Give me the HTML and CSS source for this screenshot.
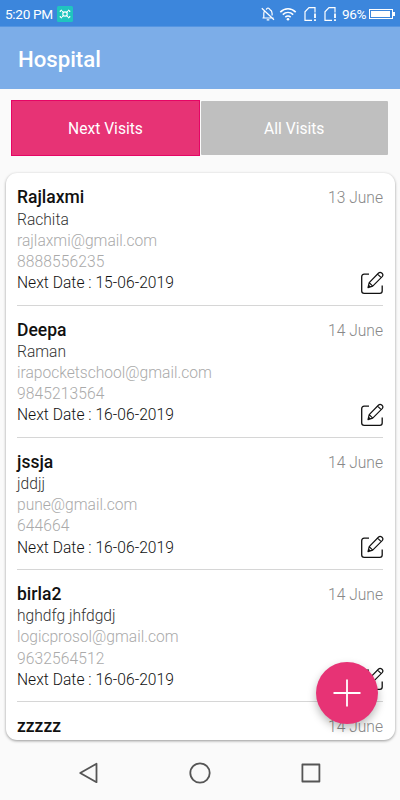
FILE: index.html
```html
<!DOCTYPE html>
<html lang="en">
<head>
    <meta charset="UTF-8">
    <meta name="viewport" content="width=device-width, initial-scale=1.0">
    <title>Hospital</title>
    <link rel="stylesheet" href="styles.css">
</head>
<body>
    <!-- Shared icons -->
    <svg class="icon-defs" width="0" height="0">
        <symbol id="icon-edit" viewBox="0 0 24 24">
            <path d="M9 3.2H4.2C2.6 3.2 1.7 4.1 1.7 5.7V20c0 1.6.9 2.4 2.5 2.4h15.6c1.6 0 2.4-.8 2.4-2.4v-5.6" stroke-width="1.3"/>
            <path d="M8 16.6l1.2-5L18.6 2c.9-.9 2.1-.9 3.1 0l.5.5c.9 1 .9 2.1 0 3.1l-9.5 9.5zM17.6 3.1l3.6 3.6M9.2 11.6l3.5 3.5M8 16.6l1-2 1 1z" stroke-width="1.2"/>
        </symbol>
        <symbol id="icon-sim" viewBox="0 0 14 16">
            <path d="M9 14.3H2V5.8L6 1.6h6v5" stroke-width="1.2"/>
            <path d="M12 7.5v4.5M12 13.2v1.8" stroke-width="1.8"/>
        </symbol>
    </svg>

    <div class="screen">
        <div class="status-bar">
            <span class="clock">5:20 PM</span>
            <svg class="app-badge" width="16" height="16" viewBox="0 0 16 16">
                <path d="M3.3 6V5L5 4M11 4l1.7 1v1M3.3 10v1L5 12M11 12l1.7-1v-1M5.2 5.2l1.3 1.3M10.8 5.2L9.5 6.5M5.2 10.8l1.3-1.3M10.8 10.8L9.5 9.5"/>
                <circle cx="8" cy="8" r="2.2"/>
            </svg>
            <div class="status-icons">
                <svg class="bell" width="14" height="14" viewBox="0 0 14 14">
                    <path d="M1.5 11h11M2.8 11V6.4c0-1.1.3-1.9.9-2.6M5 2.6C6 2 6 1 7 1s1 1 2 1.6c1.5.8 2.1 2 2.1 3.8v2.2M.8 1.3l12.2 11.5M5.7 12.8h2.6"/>
                </svg>
                <svg class="wifi" width="18" height="14" viewBox="0 0 18 14">
                    <path d="M1.3 5.1c4.5-4.4 10.9-4.4 15.4 0M3.8 7.7c3.1-2.9 7.3-2.9 10.4 0M6.3 10.2c1.6-1.4 3.8-1.4 5.4 0"/>
                    <circle cx="9" cy="12.2" r="1.3"/>
                </svg>
                <svg class="sim" width="14" height="16"><use href="#icon-sim"/></svg>
                <svg class="sim" width="14" height="16"><use href="#icon-sim"/></svg>
                <span class="percent">96%</span>
                <div class="battery"><div class="battery-level"></div></div>
            </div>
        </div>

        <div class="app-bar">
            <h1>Hospital</h1>
        </div>

        <div class="tabs">
            <button class="tab active">Next Visits</button>
            <button class="tab">All Visits</button>
        </div>

        <div class="visit-list">
            <div class="visit">
                <div class="visit-info">
                    <h2>Rajlaxmi</h2>
                    <p>Rachita</p>
                    <p class="contact">rajlaxmi@gmail.com</p>
                    <p class="contact phone">8888556235</p>
                    <p class="next-date">Next Date : 15-06-2019</p>
                </div>
                <div class="visit-side">
                    <span class="date">13 June</span>
                    <svg class="edit" width="24" height="24"><use href="#icon-edit"/></svg>
                </div>
            </div>
            <div class="visit">
                <div class="visit-info">
                    <h2>Deepa</h2>
                    <p>Raman</p>
                    <p class="contact">irapocketschool@gmail.com</p>
                    <p class="contact phone">9845213564</p>
                    <p class="next-date">Next Date : 16-06-2019</p>
                </div>
                <div class="visit-side">
                    <span class="date">14 June</span>
                    <svg class="edit" width="24" height="24"><use href="#icon-edit"/></svg>
                </div>
            </div>
            <div class="visit">
                <div class="visit-info">
                    <h2>jssja</h2>
                    <p>jddjj</p>
                    <p class="contact">pune@gmail.com</p>
                    <p class="contact phone">644664</p>
                    <p class="next-date">Next Date : 16-06-2019</p>
                </div>
                <div class="visit-side">
                    <span class="date">14 June</span>
                    <svg class="edit" width="24" height="24"><use href="#icon-edit"/></svg>
                </div>
            </div>
            <div class="visit">
                <div class="visit-info">
                    <h2>birla2</h2>
                    <p>hghdfg jhfdgdj</p>
                    <p class="contact">logicprosol@gmail.com</p>
                    <p class="contact phone">9632564512</p>
                    <p class="next-date">Next Date : 16-06-2019</p>
                </div>
                <div class="visit-side">
                    <span class="date">14 June</span>
                    <svg class="edit" width="24" height="24"><use href="#icon-edit"/></svg>
                </div>
            </div>
            <div class="visit">
                <div class="visit-info">
                    <h2>zzzzz</h2>
                </div>
                <div class="visit-side">
                    <span class="date">14 June</span>
                </div>
            </div>
        </div>

        <button class="add-btn" aria-label="Add">
            <svg width="28" height="28" viewBox="0 0 28 28"><path d="M14 .5v27M.5 14h27"/></svg>
        </button>

        <div class="nav-bar">
            <svg width="24" height="24" viewBox="0 0 24 24"><path d="M19.5 2.8v18.4L3.2 12z"/></svg>
            <svg width="24" height="24" viewBox="0 0 24 24"><circle cx="12" cy="12" r="9.7"/></svg>
            <svg width="24" height="24" viewBox="0 0 24 24"><rect x="3.4" y="3.5" width="17" height="17"/></svg>
        </div>
    </div>
</body>
</html>
```
FILE: styles.css
```css
:root {
    --blue-dark: #3c86dc;
    --blue-light: #7cade8;
    --pink: #e73375;
    --pink-border: #e60565;
    --grey: #bfbfbf;
    --bg: #fafafa;
}

* {
    margin: 0;
    padding: 0;
    box-sizing: border-box;
}

body {
    font-family: Roboto, sans-serif;
    background: var(--bg);
}

svg {
    display: block;
    fill: none;
}

.icon-defs {
    position: absolute;
}

.screen {
    position: relative;
    width: 400px;
    height: 800px;
    overflow: hidden;
    display: flex;
    flex-direction: column;
}

/* Status bar */
.status-bar {
    height: 27px;
    flex: none;
    display: flex;
    align-items: center;
    padding: 0 5px;
    background: var(--blue-dark);
    border-bottom: 1px solid #5595e1;
    color: #fff;
    font-size: 13.6px;
}

.clock {
    width: 52px;
    padding-top: 2px;
    letter-spacing: -0.3px;
    white-space: nowrap;
}

.app-badge {
    margin-top: 2px;
    background: #20c4bf;
    border-radius: 1.5px;
    stroke: #fff;
    stroke-width: 1.2;
}

.status-icons {
    margin-left: auto;
    padding-top: 2px;
    display: flex;
    align-items: center;
    stroke: #fff;
    stroke-width: 1.2;
}

.bell {
    margin-right: -1px;
    transform: translateX(1px);
}

.wifi {
    margin-left: 6px;
    stroke-width: 1.6;
}

.wifi circle {
    fill: #fff;
    stroke: none;
}

.sim {
    margin-left: 6px;
}

.percent {
    margin-left: 5px;
    width: 24px;
    font-size: 13.6px;
    letter-spacing: -0.4px;
}

.battery {
    position: relative;
    width: 24px;
    height: 10px;
    margin: 0 2px 0 3px;
    padding: 1px;
    border: 1px solid #fff;
}

.battery::after {
    content: "";
    position: absolute;
    top: 2px;
    right: -3px;
    width: 2px;
    height: 4px;
    background: #fff;
}

.battery-level {
    width: 96%;
    height: 100%;
    background: #fff;
}

/* Header */
.app-bar {
    height: 62px;
    flex: none;
    display: flex;
    align-items: center;
    padding: 2px 18px 0;
    background: var(--blue-light);
}

.app-bar h1 {
    color: #fff;
    font-size: 22.2px;
    font-weight: 500;
}

/* Tabs */
.tabs {
    display: flex;
    align-items: center;
    flex: none;
    height: 56px;
    margin: 11px 11px 0;
}

.tab {
    width: 187.5px;
    height: 54px;
    padding-top: 1px;
    border: none;
    border-radius: 1px;
    background: var(--grey);
    color: #fff;
    font: 400 15.6px Roboto, sans-serif;
}

.tab.active {
    width: 189px;
    height: 56px;
    margin-right: 0.5px;
    border: 1px solid var(--pink-border);
    border-radius: 0;
    background: var(--pink);
}

/* Visits */
.visit-list {
    flex: none;
    height: 567px;
    margin: 17px 5px 0 6px;
    padding: 0.7px 12px 0 11px;
    overflow: hidden;
    background: #fff;
    border-radius: 11px;
    box-shadow: 0 1px 3px rgba(0, 0, 0, 0.4);
}

.visit {
    display: flex;
    justify-content: space-between;
    height: 132.2px;
    padding: 13.7px 0 11.3px;
    border-bottom: 1px solid #d6d6d6;
    line-height: 21.2px;
    font-size: 15.6px;
    font-weight: 300;
}

.visit h2 {
    margin-bottom: 1.1px;
    color: #111;
    font-size: 17.5px;
    font-weight: 500;
}

.visit p {
    color: #333;
}

.visit p.contact {
    color: #aaa;
}

.visit p.phone {
    letter-spacing: 0.1px;
}

.visit p.next-date {
    color: #111;
    letter-spacing: 0.03px;
}

.visit-side {
    display: flex;
    flex-direction: column;
    justify-content: space-between;
    align-items: flex-end;
}

.date {
    padding-top: 1px;
    color: #888;
}

.edit {
    margin: 0 -1px -1px 0;
    stroke: #111;
    stroke-linejoin: round;
}

/* Floating button */
.add-btn {
    position: absolute;
    left: 315.5px;
    top: 662px;
    width: 62px;
    height: 62px;
    display: flex;
    align-items: center;
    justify-content: center;
    border: none;
    border-radius: 50%;
    background: var(--pink);
    box-shadow: 0 4px 8px rgba(0, 0, 0, 0.28);
    stroke: #fff;
    stroke-width: 1.8;
}

/* System navigation */
.nav-bar {
    flex: 1;
    display: flex;
    justify-content: space-between;
    align-items: center;
    padding: 6px 77px 0;
    stroke: #555;
    stroke-width: 1.8;
    stroke-linejoin: round;
}
```
